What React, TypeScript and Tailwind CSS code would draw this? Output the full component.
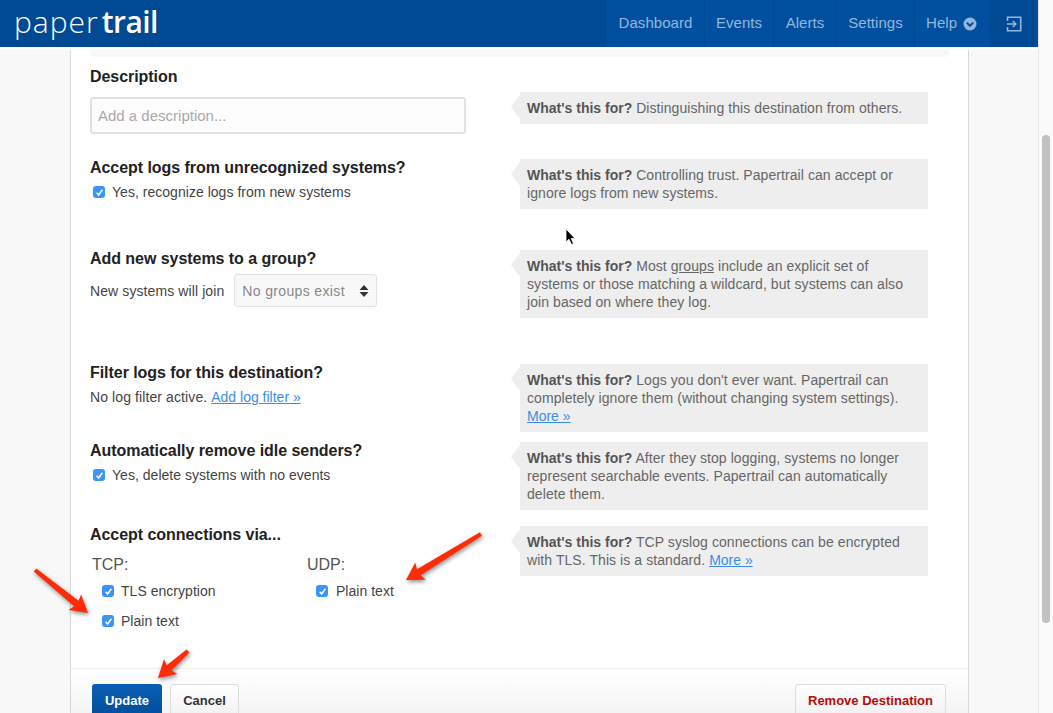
const sans = 'font-["Liberation_Sans",Arial,sans-serif]'

function Tick() {
  return (
    <span className="w-[12px] h-[12px] shrink-0 rounded-[3px] bg-[#3b95f8] flex items-center justify-center">
      <svg width="9" height="9" viewBox="0 0 9 9" fill="none">
        <path d="M1.6 4.8 L3.6 7 L7.4 1.8" stroke="white" strokeWidth="1.5" />
      </svg>
    </span>
  )
}

function Check({ label, className = '' }: { label: string; className?: string }) {
  return (
    <label className={`flex items-center gap-[7px] text-[14px] leading-[18px] tracking-[0.03px] text-[#444] ${className}`}>
      <Tick />
      {label}
    </label>
  )
}

function Hint({ children, className = '' }: { children: React.ReactNode; className?: string }) {
  return (
    <div className={`relative ml-[50px] w-[408px] bg-[#eeeeee] pl-[7px] pr-2 py-[7px] text-[14px] leading-[18px] tracking-[0.07px] text-[#666] ${className}`}>
      <span className="absolute left-[-9px] top-[3px] w-0 h-0 border-y-[12px] border-y-transparent border-r-[9px] border-r-[#eeeeee]" />
      <b className="text-[#555] tracking-normal">What's this for?</b> {children}
    </div>
  )
}

function Heading({ children }: { children: React.ReactNode }) {
  return <h3 className="text-[16px] leading-[18px] font-bold tracking-[-0.05px] text-[#222]">{children}</h3>
}

function Row({ height, left, hint, hintClass }: { height: string; left: React.ReactNode; hint: React.ReactNode; hintClass?: string }) {
  return (
    <div className={`flex items-start ${height}`}>
      <div className="w-[380px] shrink-0">{left}</div>
      <Hint className={hintClass}>{hint}</Hint>
    </div>
  )
}

function Arrow({ from, to }: { from: [number, number]; to: [number, number] }) {
  const dx = from[0] - to[0]
  const dy = from[1] - to[1]
  const len = Math.hypot(dx, dy)
  const ux = dx / len
  const uy = dy / len
  const nx = -uy
  const ny = ux
  const at = (along: number, side: number) => `${to[0] + ux * along + nx * side},${to[1] + uy * along + ny * side}`
  return <polygon points={[at(0, 0), at(17, 10), at(15, 3.5), at(len, 2), at(len, -2), at(15, -3.5), at(17, -10)].join(' ')} fill="#fe2c06" />
}

const navItems = [
  { label: 'Dashboard', w: 'w-[98px]' },
  { label: 'Events', w: 'w-[69px]' },
  { label: 'Alerts', w: 'w-[63px]' },
  { label: 'Settings', w: 'w-[78px]' },
]

export default function App() {
  return (
    <div className={`relative h-[713px] w-[1053px] overflow-hidden flex bg-[#f8f8f8] ${sans}`}>
      <div className="w-[1038px] flex flex-col">
        <header className="h-[47px] shrink-0 bg-[#004a94] flex items-stretch justify-between">
          <div className="pl-[14px] text-[30px] leading-[43px] tracking-[1px] text-white font-['Open_Sans',sans-serif] font-light">
            paper<span className="font-semibold tracking-[-0.6px] ml-[3px]">trail</span>
          </div>
          <nav className="flex items-stretch bg-[#00509f] text-[15px] tracking-[0.05px] text-[#95b6dc] border-l border-[#004a94]">
            {navItems.map((item) => (
              <a key={item.label} className={`${item.w} flex items-center justify-center border-r border-[#004a94]`}>
                {item.label}
              </a>
            ))}
            <a className="w-[75px] flex items-center pl-[11px] gap-[6px]">
              Help
              <svg width="14" height="14" viewBox="0 0 14 14">
                <circle cx="7" cy="7" r="6.5" fill="#95b6dc" />
                <path d="M3.8 5.6 L7 8.8 L10.2 5.6" stroke="#00509f" strokeWidth="2" fill="none" />
              </svg>
            </a>
            <a className="w-[48px] flex items-center justify-center bg-[#004a94]">
              <svg width="16" height="16" viewBox="0 0 16 16" fill="none" stroke="#95b6dc" strokeWidth="1.6">
                <path d="M1.5 5 V1.3 H14.7 V14.7 H1.5 V11" />
                <path d="M1 8 H9.5 M6.8 5 L9.8 8 L6.8 11" />
              </svg>
            </a>
          </nav>
        </header>
        <div className="h-[3px] shrink-0 bg-white" />

        <main className="ml-[70px] w-[899px] flex-1 bg-white border-x border-[#d8d8d8] flex flex-col">
          <div className="mx-[19px] h-[7px] shrink-0 rounded-b-[4px] bg-[#f8f8f8]" />
          <div className="pl-[19px] pt-[11px] flex flex-col h-[611px]">
            <div className="flex items-start h-[91px]">
              <div className="w-[376px] shrink-0">
                <Heading>Description</Heading>
                <input
                  placeholder="Add a description..."
                  className="mt-[11px] w-[376px] h-[37px] rounded-[3px] border-2 border-[#e2e2e2] bg-[#fdfdfd] px-[6px] text-[15px] placeholder:text-[#aaaaaa] outline-none"
                />
              </div>
              <Hint className="mt-[24px] ml-[54px]">Distinguishing this destination from others.</Hint>
            </div>

            <Row
              height="h-[91px]"
              left={
                <>
                  <Heading>Accept logs from unrecognized systems?</Heading>
                  <Check label="Yes, recognize logs from new systems" className="mt-[6px] pl-[3px]" />
                </>
              }
              hint="Controlling trust. Papertrail can accept or ignore logs from new systems."
              hintClass="ml-[50px]"
            />

            <Row
              height="h-[114px]"
              left={
                <>
                  <Heading>Add new systems to a group?</Heading>
                  <div className="mt-[6px] flex items-center gap-[10px] text-[14px] text-[#444]">
                    <span className="pt-[2px] tracking-[0.1px]">New systems will join</span>
                    <div className="w-[143px] h-[33px] rounded-[3px] border border-[#e2e2e2] bg-[#f8f8f8] pl-[7px] pr-[7px] flex items-center justify-between text-[#888] tracking-[0.35px]">
                      <span className="pt-[2px]">No groups exist</span>
                      <svg width="10" height="14" viewBox="0 0 10 14" fill="#333">
                        <path d="M5 1 L9.5 6 H0.5 Z M5 13 L9.5 8 H0.5 Z" />
                      </svg>
                    </div>
                  </div>
                </>
              }
              hint={
                <>
                  Most <u>groups</u> include an explicit set of systems or those matching a wildcard, but systems can also join based on where they log.
                </>
              }
            />

            <Row
              height="h-[78px]"
              left={
                <>
                  <Heading>Filter logs for this destination?</Heading>
                  <p className="mt-[6px] text-[14px] leading-[18px] tracking-[0.1px] text-[#444]">
                    No log filter active. <a className="text-[#3b8ee8] underline tracking-normal">Add log filter »</a>
                  </p>
                </>
              }
              hint={
                <>
                  Logs you don't ever want. Papertrail can completely ignore them (without changing system settings).{' '}
                  <a className="text-[#3b8ee8] underline tracking-normal">More »</a>
                </>
              }
            />

            <Row
              height="h-[84px]"
              left={
                <>
                  <Heading>Automatically remove idle senders?</Heading>
                  <Check label="Yes, delete systems with no events" className="mt-[6px] pl-[3px]" />
                </>
              }
              hint="After they stop logging, systems no longer represent searchable events. Papertrail can automatically delete them."
            />

            <Row
              height="h-[142px]"
              left={
                <>
                  <Heading>Accept connections via...</Heading>
                  <div className="mt-[11px] pl-[2px] flex">
                    <div className="w-[215px]">
                      <div className="text-[16px] leading-[20px] text-[#555]">TCP:</div>
                      <Check label="TLS encryption" className="mt-[7px] ml-[10px]" />
                      <Check label="Plain text" className="mt-[12px] ml-[10px]" />
                    </div>
                    <div>
                      <div className="text-[16px] leading-[20px] text-[#555]">UDP:</div>
                      <Check label="Plain text" className="mt-[7px] ml-[9px] gap-[8px]" />
                    </div>
                  </div>
                </>
              }
              hint={
                <>
                  TCP syslog connections can be encrypted with TLS. This is a standard. <a className="text-[#3b8ee8] underline tracking-normal">More »</a>
                </>
              }
            />
          </div>

          <footer className="flex-1 border-t border-[#eeeeee] bg-gradient-to-b from-white to-[#f1f1f1] pl-[21px] pr-[22px] pt-[15px] flex items-start justify-between">
            <div className="flex gap-2">
              <button className="w-[70px] h-[40px] rounded-[3px] bg-gradient-to-b from-[#0b5fb4] to-[#004a94] text-[13px] font-bold text-white pb-[12px] pt-[6px]">
                Update
              </button>
              <button className="w-[69px] h-[40px] rounded-[3px] border border-[#dddddd] bg-gradient-to-b from-white to-[#eeeeee] text-[13px] font-bold text-[#333] pb-[12px] pt-[6px]">
                Cancel
              </button>
            </div>
            <button className="w-[151px] h-[40px] rounded-[3px] border border-[#dddddd] bg-gradient-to-b from-white to-[#eeeeee] text-[13px] font-bold text-[#b30c0c] pb-[12px] pt-[6px]">
              Remove Destination
            </button>
          </footer>
        </main>
      </div>

      <div className="w-[15px] border-l border-[#e8e8e8] bg-[#fafafa] pt-[135px] pl-[3px]">
        <div className="w-[8px] h-[488px] rounded-full bg-[#c1c1c1]" />
      </div>

      {/* annotations drawn on top of the screenshot */}
      <svg className="absolute inset-0 pointer-events-none drop-shadow-[1px_2px_2px_rgba(0,0,0,0.45)]" width="1053" height="713">
        <Arrow from={[35, 570]} to={[88, 613]} />
        <Arrow from={[481, 534]} to={[406, 580]} />
        <Arrow from={[188, 651]} to={[158, 678]} />
      </svg>
      <svg className="absolute left-[565px] top-[228px]" width="12" height="18" viewBox="0 0 12 18">
        <path d="M1 1 V14 L4 11.2 L6.5 16.5 L8.5 15.5 L6.2 10.4 H10 Z" fill="#000" stroke="#fff" strokeWidth="0.8" />
      </svg>
    </div>
  )
}
